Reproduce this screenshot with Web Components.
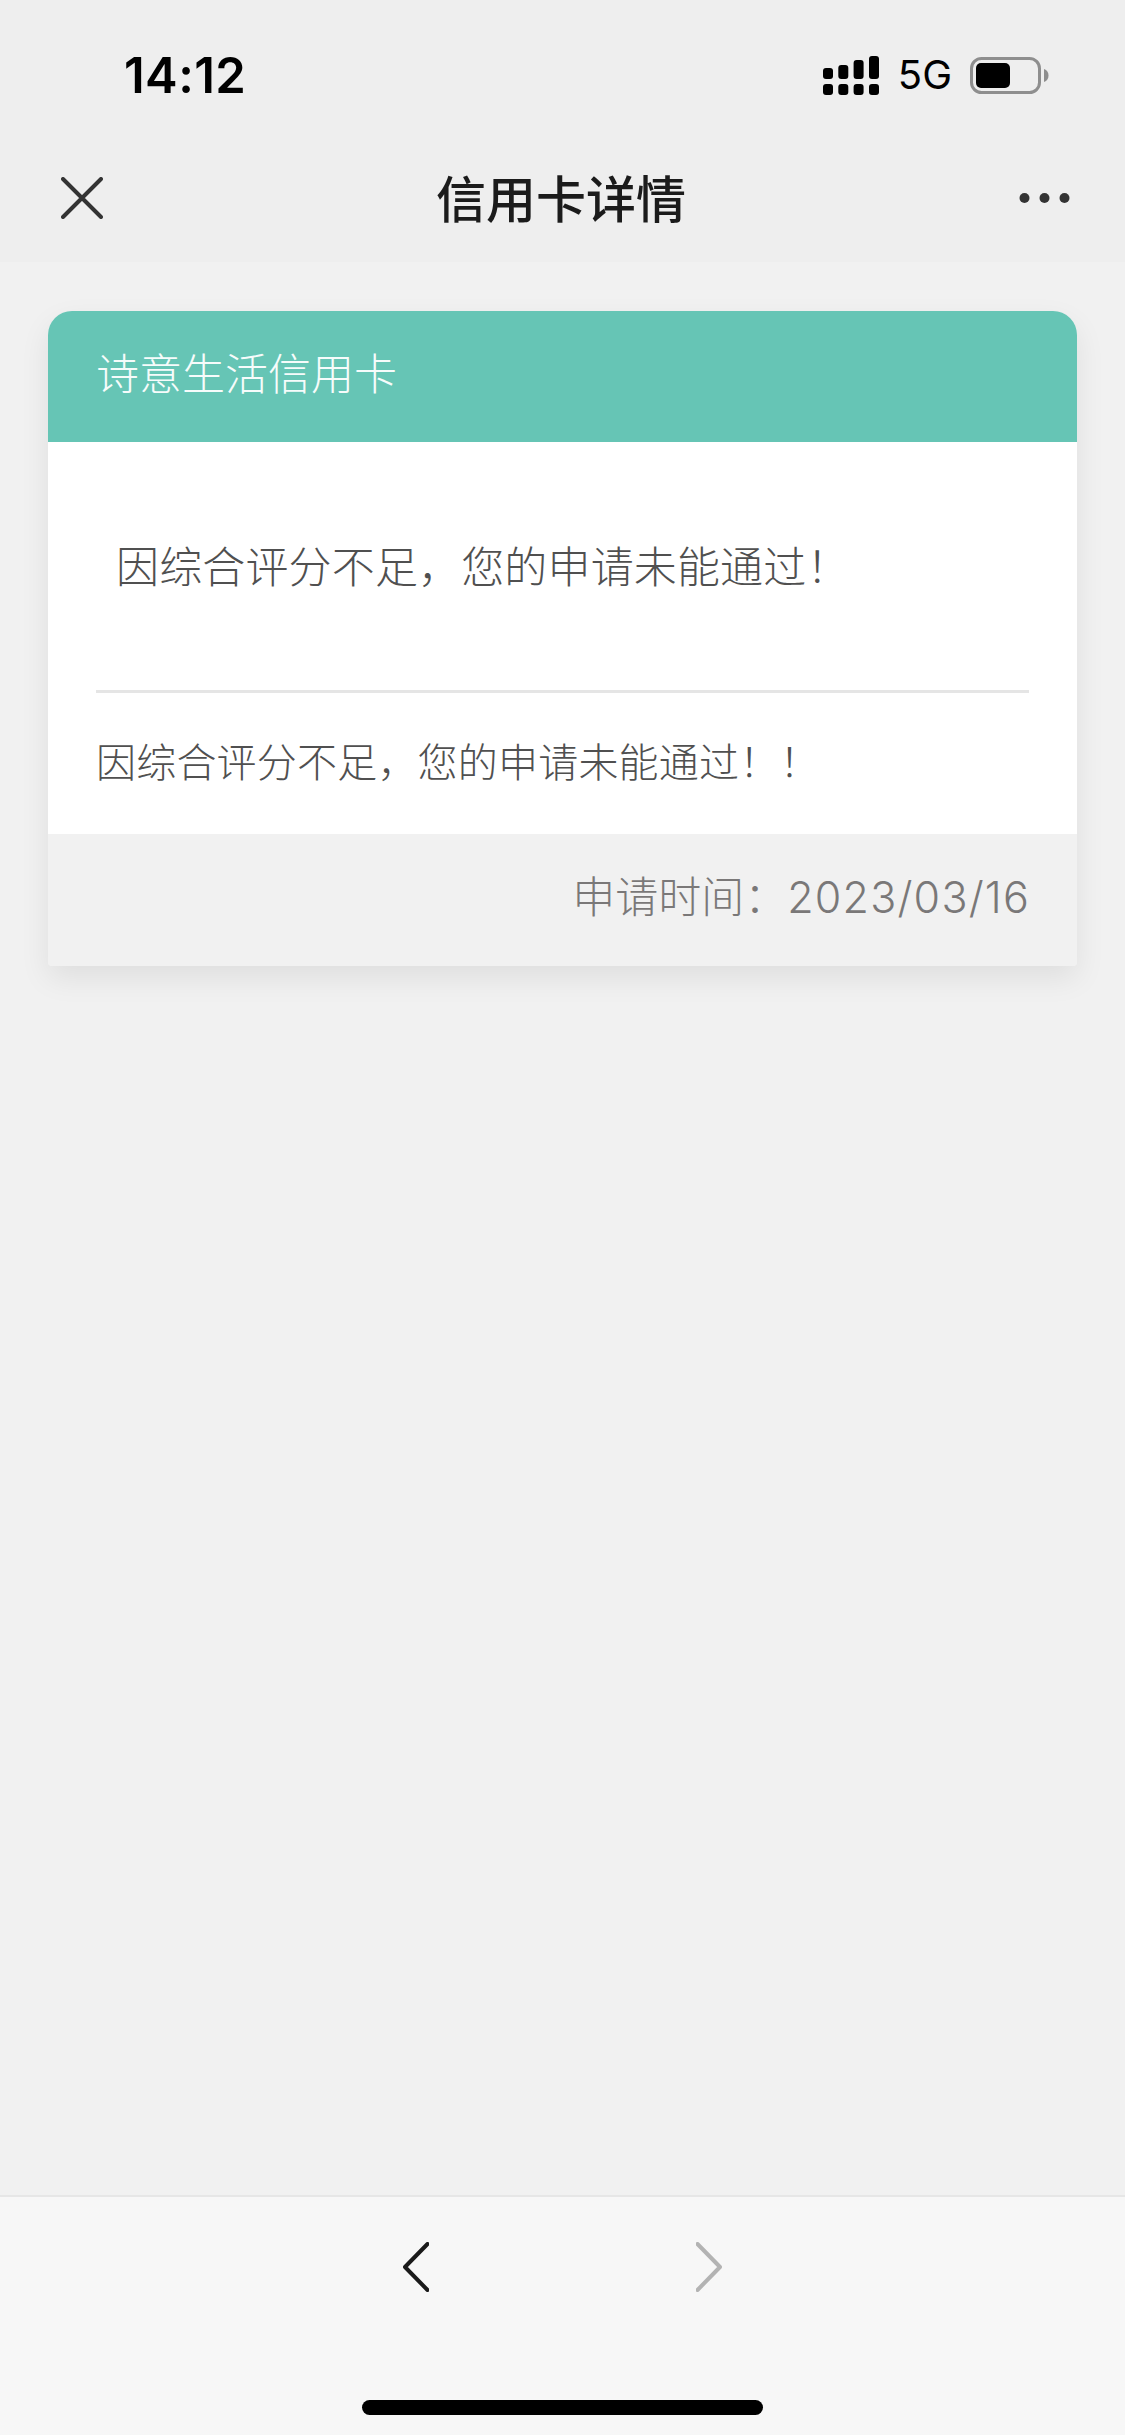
<!DOCTYPE html>
<html lang="zh">
<head>
<meta charset="utf-8">
<title>信用卡详情</title>
<style>
    html, body { margin: 0; padding: 0; height: 2435px; }
    body {
        display: flex;
        flex-direction: column;
        background: #f1f1f1;
        font-family: "Inter", "Noto Sans CJK SC", sans-serif;
        overflow: hidden;
    }
    page-content { flex: 1; }
</style>
</head>
<body>
    <status-bar time="14:12"></status-bar>
    <nav-bar>信用卡详情</nav-bar>
    <page-content>
        <credit-card>
            <span slot="title">诗意生活信用卡</span>
            <span slot="message">因综合评分不足，您的申请未能通过！</span>
            <span slot="detail">因综合评分不足，您的申请未能通过！！</span>
            <span slot="footer">申请时间：<span style="letter-spacing: 1.2px">2023/03/16</span></span>
        </credit-card>
    </page-content>
    <bottom-bar></bottom-bar>

<script>
class StatusBar extends HTMLElement {
    connectedCallback() {
        this.attachShadow({ mode: 'open' });
        this.shadowRoot.innerHTML = `
            <style>
                :host {
                    display: flex;
                    height: 132px;
                    box-sizing: border-box;
                    background: #eeeeee;
                    justify-content: space-between;
                    align-items: center;
                    padding: 18px 76px 0 124px;
                    color: #000;
                }
                .time { font: 600 49px/1 "Inter", sans-serif; letter-spacing: 0.4px; }
                .right { display: flex; align-items: center; gap: 18px; }
                .net { font: 400 40px/1 "Inter", sans-serif; }
                svg { display: block; }
            </style>
            <div class="time">${this.getAttribute('time')}</div>
            <div class="right">
                <svg width="57" height="40" viewBox="0 0 57 40">
                    <rect x="0" y="13" width="10" height="11" rx="3"/>
                    <rect x="15.3" y="10" width="10" height="14" rx="3"/>
                    <rect x="30.6" y="5" width="10" height="19" rx="3"/>
                    <rect x="46" y="1" width="10" height="23" rx="3"/>
                    <rect x="0" y="29" width="10" height="11" rx="3"/>
                    <rect x="15.3" y="29" width="10" height="11" rx="3"/>
                    <rect x="30.6" y="29" width="10" height="11" rx="3"/>
                    <rect x="46" y="29" width="10" height="11" rx="3"/>
                </svg>
                <div class="net">5G</div>
                <svg width="79" height="37" viewBox="0 0 79 37">
                    <rect x="1.5" y="1.5" width="68" height="34" rx="10" fill="none" stroke="#8e8e8e" stroke-width="3"/>
                    <rect x="6" y="6" width="34" height="25" rx="5"/>
                    <path d="M74 12c3 1 4.500 3.500 4.500 6.500s-1.500 5.500-4.500 6.500z" fill="#8e8e8e"/>
                </svg>
            </div>
        `;
    }
}

class NavBar extends HTMLElement {
    connectedCallback() {
        this.attachShadow({ mode: 'open' });
        this.shadowRoot.innerHTML = `
            <style>
                :host {
                    display: flex;
                    height: 130px;
                    box-sizing: border-box;
                    background: #eeeeee;
                    align-items: center;
                    justify-content: space-between;
                    padding: 2px 55px 0 61px;
                    color: #1a1a1a;
                }
                .title {
                    font: 500 50px/1 "Noto Sans CJK SC", sans-serif;
                    color: #1b1b1b;
                    margin-top: -4px;
                }
                svg { display: block; }
            </style>
            <svg width="42" height="42" viewBox="0 0 42 42">
                <path d="M2 2 L40 40 M40 2 L2 40" stroke="#333" stroke-width="4" stroke-linecap="round" fill="none"/>
            </svg>
            <div class="title"><slot></slot></div>
            <svg width="51" height="12" viewBox="0 0 51 12" fill="#333">
                <circle cx="5.500" cy="6" r="5"/>
                <circle cx="25.500" cy="6" r="5"/>
                <circle cx="45.500" cy="6" r="5"/>
            </svg>
        `;
    }
}

class CreditCard extends HTMLElement {
    connectedCallback() {
        this.attachShadow({ mode: 'open' });
        this.shadowRoot.innerHTML = `
            <style>
                :host {
                    display: block;
                    margin: 49px 48px 0;
                    border-radius: 24px 24px 4px 4px;
                    box-shadow: 0 12px 30px rgba(0, 0, 0, 0.08);
                    font-family: "Inter", "Noto Sans CJK SC", sans-serif;
                }
                .head {
                    height: 131px;
                    box-sizing: border-box;
                    display: flex;
                    align-items: center;
                    padding: 0 48px 12px;
                    background: #66c5b5;
                    color: #f6fcfb;
                    font-size: 43px;
                    font-weight: 300;
                    border-radius: 24px 24px 0 0;
                }
                .body { background: #fff; padding: 0 48px; color: #505050; }
                .message {
                    height: 251px;
                    display: flex;
                    align-items: center;
                    padding: 0 20px 4px;
                    box-sizing: border-box;
                    border-bottom: 3px solid #e5e5e5;
                    font-size: 43px;
                    font-weight: 300;
                    letter-spacing: 0.15px;
                }
                .detail {
                    height: 141px;
                    box-sizing: border-box;
                    padding-top: 46px;
                    font-size: 40px;
                    line-height: 48px;
                    font-weight: 300;
                    letter-spacing: 0.2px;
                }
                .foot {
                    height: 132px;
                    box-sizing: border-box;
                    display: flex;
                    align-items: center;
                    justify-content: flex-end;
                    padding: 0 47px 12px 48px;
                    background: #f1f1f1;
                    color: #7a7878;
                    font-size: 43px;
                    font-weight: 300;
                    border-radius: 0 0 4px 4px;
                }
            </style>
            <div class="head"><slot name="title"></slot></div>
            <div class="body">
                <div class="message"><slot name="message"></slot></div>
                <div class="detail"><slot name="detail"></slot></div>
            </div>
            <div class="foot"><slot name="footer"></slot></div>
        `;
    }
}

class BottomBar extends HTMLElement {
    connectedCallback() {
        this.attachShadow({ mode: 'open' });
        this.shadowRoot.innerHTML = `
            <style>
                :host {
                    display: flex;
                    flex-direction: column;
                    align-items: center;
                    height: 240px;
                    box-sizing: border-box;
                    background: #f7f7f7;
                    border-top: 2px solid #e6e6e6;
                }
                .arrows {
                    display: flex;
                    gap: 267px;
                    margin-top: 45px;
                    margin-left: -1px;
                }
                .home {
                    width: 401px;
                    height: 15px;
                    margin-top: 108px;
                    background: #000;
                    border-radius: 8px;
                }
                svg { display: block; }
            </style>
            <div class="arrows">
                <svg width="26" height="50" viewBox="0 0 26 50">
                    <path d="M24.500 2 L2 25 L24.500 48" fill="none" stroke="#1a1a1a" stroke-width="4" stroke-linecap="round" stroke-linejoin="round"/>
                </svg>
                <svg width="26" height="50" viewBox="0 0 26 50">
                    <path d="M1.500 2 L24 25 L1.500 48" fill="none" stroke="#b3b3b3" stroke-width="4" stroke-linecap="round" stroke-linejoin="round"/>
                </svg>
            </div>
            <div class="home"></div>
        `;
    }
}

customElements.define('status-bar', StatusBar);
customElements.define('nav-bar', NavBar);
customElements.define('credit-card', CreditCard);
customElements.define('bottom-bar', BottomBar);
</script>
</body>
</html>
